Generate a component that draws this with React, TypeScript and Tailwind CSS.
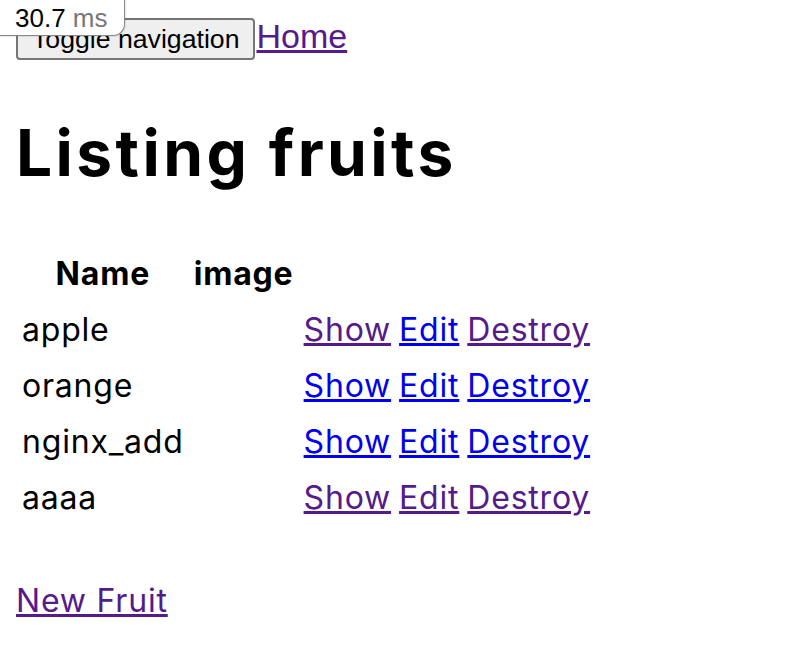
import React from 'react';

type Fruit = { name: string; show: boolean; edit: boolean; destroy: boolean };

// true = visited link colour
const fruits: Fruit[] = [
  { name: 'apple', show: true, edit: false, destroy: true },
  { name: 'orange', show: false, edit: false, destroy: false },
  { name: 'nginx_add', show: false, edit: false, destroy: false },
  { name: 'aaaa', show: true, edit: true, destroy: true },
];

const linkClass = (visited: boolean) =>
  visited ? 'underline text-[#551a8b]' : 'underline text-[#0000ee]';

const App: React.FC = () => {
  return (
    <div className="relative min-h-[670px] bg-white p-4 text-black font-['Inter','Noto_Sans',sans-serif] text-[32px] leading-[48px]">
      {/* profiler badge */}
      <div className="absolute left-0 top-0 z-10 h-[36px] w-[125px] rounded-br-[12px] border-r border-b border-[#888] bg-white pl-[15px] font-['Liberation_Sans',Arial,sans-serif] text-[26px] leading-[36px] shadow-[0_0_2px_rgba(0,0,0,0.3)]">
        <span className="text-black">30.7</span> <span className="text-[#777]">ms</span>
      </div>

      <nav className="flex items-start h-[46px]">
        <button className="mt-[2px] h-[42px] rounded-[4px] border-2 border-[#767676] bg-[#efefef] px-[14px] font-['Liberation_Sans',Arial,sans-serif] text-[26.67px] leading-[34px] text-black">
          Toggle navigation
        </button>
        <a href="#" className="ml-px font-['Liberation_Sans',Arial,sans-serif] text-[34px] leading-[40px] underline text-[#551a8b]">
          Home
        </a>
      </nav>

      <h1 className="mt-[43px] mb-[43px] text-[64px] font-bold leading-[96px] tracking-[3.4px]">Listing fruits</h1>

      <table className="border-separate border-spacing-[4px] tracking-[0.8px]">
        <thead>
          <tr>
            <th className="w-[164px] p-[2px] text-center font-bold">Name</th>
            <th className="w-[108px] p-[2px] text-center font-bold">image</th>
            <th colSpan={3} className="p-[2px]"></th>
          </tr>
        </thead>
        <tbody>
          {fruits.map((f) => (
            <tr key={f.name}>
              <td className="p-[2px]">{f.name}</td>
              <td className="p-[2px]"></td>
              <td className="p-[2px]">
                <a href="#" className={linkClass(f.show)}>Show</a>
              </td>
              <td className="p-[2px]">
                <a href="#" className={linkClass(f.edit)}>Edit</a>
              </td>
              <td className="p-[2px]">
                <a href="#" className={linkClass(f.destroy)}>Destroy</a>
              </td>
            </tr>
          ))}
        </tbody>
      </table>

      <div className="mt-[49px] tracking-[0.8px]">
        <a href="#" className="underline text-[#551a8b]">New Fruit</a>
      </div>
    </div>
  );
};

export default App;
